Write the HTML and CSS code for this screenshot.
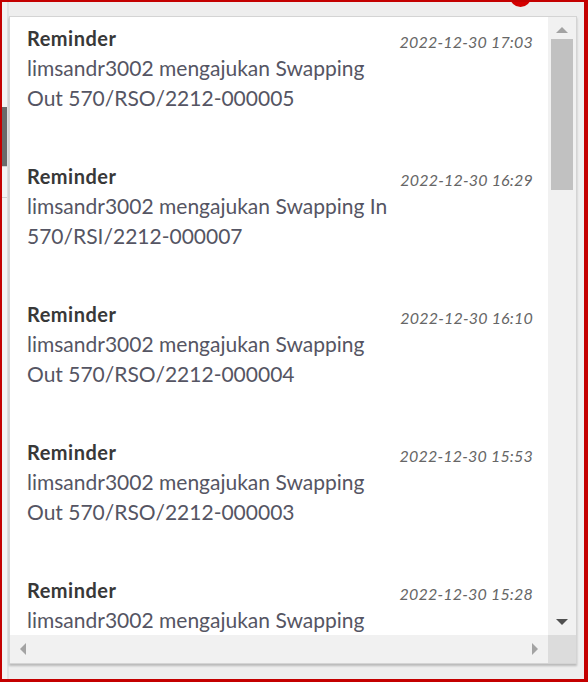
FILE: index.html
```
<!DOCTYPE html>
<html>
  <head>
    <meta charset="utf-8" />
    <title>Notifikasi</title>
    <meta name="viewport" content="width=device-width, initial-scale=1" />
    <link rel="stylesheet" href="styles.css">
  </head>

  <body>
    <div class="screen">
      <!-- page behind the dropdown -->
      <div class="page">
        <div class="side">
          <div class="side-active"></div>
          <div class="side-row"></div>
          <div class="side-row"></div>
        </div>
        <div class="page-main">
          <span class="badge"></span>
        </div>
      </div>

      <!-- notification dropdown -->
      <div class="notif">
        <div class="notif-list">
          <div class="item">
            <div class="item-main">
              <div class="item-title">Reminder</div>
              <div class="item-text">limsandr3002 mengajukan Swapping Out 570/RSO/2212-000005</div>
            </div>
            <div class="item-date">2022-12-30 17:03</div>
          </div>
          <div class="item">
            <div class="item-main">
              <div class="item-title">Reminder</div>
              <div class="item-text">limsandr3002 mengajukan Swapping In 570/RSI/2212-000007</div>
            </div>
            <div class="item-date">2022-12-30 16:29</div>
          </div>
          <div class="item">
            <div class="item-main">
              <div class="item-title">Reminder</div>
              <div class="item-text">limsandr3002 mengajukan Swapping Out 570/RSO/2212-000004</div>
            </div>
            <div class="item-date">2022-12-30 16:10</div>
          </div>
          <div class="item">
            <div class="item-main">
              <div class="item-title">Reminder</div>
              <div class="item-text">limsandr3002 mengajukan Swapping Out 570/RSO/2212-000003</div>
            </div>
            <div class="item-date">2022-12-30 15:53</div>
          </div>
          <div class="item">
            <div class="item-main">
              <div class="item-title">Reminder</div>
              <div class="item-text">limsandr3002 mengajukan Swapping</div>
            </div>
            <div class="item-date">2022-12-30 15:28</div>
          </div>
        </div>

        <div class="vbar">
          <span class="arrow arrow-up"></span>
          <div class="vtrack"><div class="vthumb"></div></div>
          <span class="arrow arrow-down"></span>
        </div>
        <div class="hbar">
          <span class="arrow arrow-left"></span>
          <span class="arrow arrow-right"></span>
        </div>
        <div class="corner"></div>
      </div>
    </div>
  </body>
</html>
```

FILE: styles.css
```
* {
    box-sizing: border-box;
}

body {
    margin: 0;
    font-family: 'Lato', 'Open Sans', sans-serif;
}

.screen {
    position: relative;
    width: 588px;
    height: 682px;
    overflow: hidden;
    border: solid #c40000;
    border-width: 2px 4px 3px 2px;
    background-color: #eeeeee;
}

/* the page under the dropdown */
.page {
    display: flex;
    height: 100%;
}

.side {
    width: 7px;
    padding-top: 105px;
    background-color: #f3f3f3;
    border-right: 2px solid #e2e2e2;
}

.side-active {
    height: 59px;
    background-color: #6a6a6a;
}

.side-row {
    height: 31px;
    border-top: 1px solid #cfcfcf;
}

.side-row:first-of-type {
    margin-top: 51px;
}

.page-main {
    flex: 1;
    position: relative;
}

.badge {
    position: absolute;
    top: -16px;
    left: 501px;
    width: 21px;
    height: 21px;
    border-radius: 50%;
    background-color: #d40000;
}

/* dropdown */
.notif {
    position: absolute;
    top: 14px;
    left: 7px;
    width: 568px;
    height: 648px;

    display: grid;
    grid-template-columns: 1fr 28px;
    grid-template-rows: 1fr 28px;

    background-color: #fff;
    border: 1px solid #d4d4d4;
    box-shadow: 0 2px 2px rgba(0, 0, 0, 0.22);
}

.notif-list {
    overflow: hidden;
    padding: 6px 15px 0 17px;
}

.item {
    display: flex;
    margin-bottom: 48px;
}

.item-main {
    flex: 1;
}

.item-title {
    font-size: 20px;
    font-weight: bold;
    line-height: 30px;
    letter-spacing: 0.5px;
    color: #383838;
}

.item-text {
    font-size: 21px;
    line-height: 30px;
    color: #555563;
}

.item-date {
    flex: none;
    padding: 10px 0 0 4px;
    font-size: 16px;
    font-style: italic;
    line-height: 18px;
    letter-spacing: 0.2px;
    color: #666;
}

/* scrollbars */
.vbar {
    display: flex;
    flex-direction: column;
    align-items: center;
    background-color: #f1f1f1;
}

.vtrack {
    flex: 1;
    width: 100%;
    padding: 0 3px;
}

.vthumb {
    height: 151px;
    background-color: #c1c1c1;
}

.hbar {
    display: flex;
    justify-content: space-between;
    align-items: center;
    padding: 0 10px;
    background-color: #f1f1f1;
}

.corner {
    background-color: #dcdcdc;
}

.arrow {
    width: 0;
    height: 0;
    border: 6px solid transparent;
}

.arrow-up {
    margin: 10px 0 6px;
    border-top: none;
    border-bottom: 6px solid #a3a3a3;
}

.arrow-down {
    margin: 6px 0 10px;
    border-bottom: none;
    border-top: 6px solid #505050;
}

.arrow-left {
    border-left: none;
    border-right: 6px solid #a3a3a3;
}

.arrow-right {
    border-right: none;
    border-left: 6px solid #a3a3a3;
}
```
